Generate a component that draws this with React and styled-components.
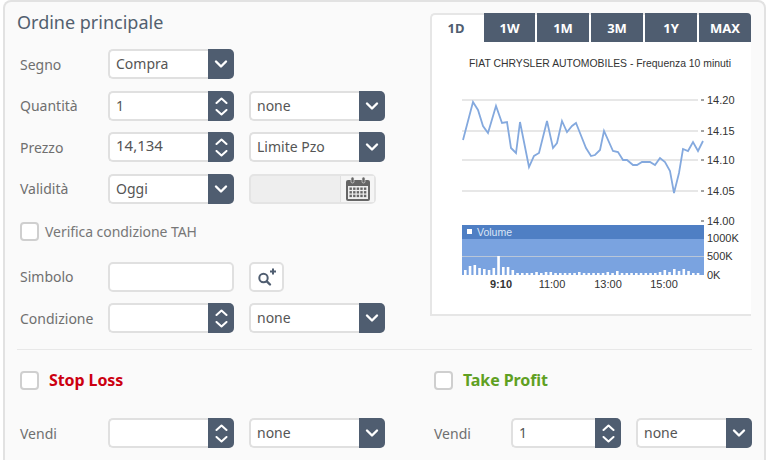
import styled, { createGlobalStyle } from "styled-components";

const GlobalStyle = createGlobalStyle`
  html, body {
    margin: 0;
    height: 460px;
    overflow: hidden;
    background: #fff;
  }
  * { box-sizing: border-box; }
`;

const DARK = "#4f5d70";

const Panel = styled.div`
  margin-left: 3px;
  width: 763px;
  height: 460px;
  overflow: hidden;
  background: #fafafa;
  border: 2px solid #e2e2e2;
  border-bottom: none;
  border-radius: 8px 8px 0 0;
  padding: 0 12px;
  font-family: "Noto Sans", sans-serif;
  color: #666;
`;

const TopArea = styled.div`
  display: flex;
  justify-content: space-between;
  align-items: flex-start;
  padding-right: 1px;
`;

const LeftColumn = styled.div`
  width: 372px;
  padding-top: 9px;
`;

const Title = styled.h2`
  margin: 0 0 16px;
  font-size: 18px;
  line-height: 22px;
  font-weight: 400;
  color: #52606f;
`;

const Rows = styled.div`
  display: flex;
  flex-direction: column;
  gap: 11.5px;
`;

const Row = styled.div`
  display: flex;
  align-items: center;
  height: 30px;
  padding-left: 3px;
`;

const Label = styled.span`
  width: ${(props) => props.width || 88}px;
  font-size: 14px;
  color: #6f6f6f;
`;

const Control = styled.div`
  display: flex;
  width: ${(props) => props.width}px;
  height: 30px;
  margin-left: ${(props) => props.gap || 0}px;
  background: #fff;
  border: 2px solid #e0e0e0;
  border-right: ${(props) => (props.plain ? "2px solid #e0e0e0" : "none")};
  border-radius: 5px;
`;

const Value = styled.div`
  flex: 1;
  padding-left: 6px;
  font-size: ${(props) => props.size || 14}px;
  line-height: ${(props) => (props.size ? 23 : 25)}px;
  color: #555;
`;

const ArrowBox = styled.div`
  width: 26px;
  margin: -2px 0;
  display: flex;
  flex-direction: column;
  align-items: center;
  justify-content: ${(props) => (props.spin ? "space-between" : "center")};
  padding: ${(props) => (props.spin ? "6px 0 5px" : "0")};
  background: ${DARK};
  border-radius: 0 5px 5px 0;
`;

const DateBox = styled.div`
  display: flex;
  width: 127px;
  height: 30px;
  margin-left: 15px;
  background: #eeeeee;
  border: 2px solid #e4e4e4;
  border-radius: 5px;
`;

const DateAddon = styled.div`
  width: 34px;
  margin-left: auto;
  display: flex;
  align-items: center;
  justify-content: center;
  background: #f5f5f5;
  border-left: 1px solid #e0e0e0;
`;

const SearchButton = styled.div`
  width: 35px;
  height: 30px;
  margin-left: 15px;
  display: flex;
  align-items: center;
  justify-content: center;
  background: #fff;
  border: 2px solid #e0e0e0;
  border-radius: 5px;
`;

const CheckRow = styled.label`
  display: flex;
  align-items: center;
  height: 18px;
  margin: ${(props) => props.margin};
  padding-left: 3px;
`;

const Box = styled.span`
  width: 19px;
  height: 19px;
  flex: none;
  background: #fff;
  border: 2px solid #cfcfcf;
  border-radius: 4px;
`;

const CheckText = styled.span`
  margin-left: ${(props) => props.gap}px;
  font-size: ${(props) => (props.color ? 16 : 14)}px;
  font-weight: ${(props) => (props.color ? 700 : 400)};
  letter-spacing: ${(props) => (props.color ? "-0.1px" : "-0.05px")};
  color: ${(props) => props.color || "#777"};
`;

const ChartCard = styled.div`
  width: 321px;
  height: 303px;
  margin-top: 11px;
  background: #fff;
  border: 2px solid #e6e6e6;
  border-right: none;
  border-radius: 5px 5px 0 0;
`;

const Tabs = styled.div`
  display: flex;
  gap: 2px;
  margin: -2px 0 0 -2px;
`;

const Tab = styled.div`
  width: ${(props) => props.width}px;
  height: 29px;
  display: flex;
  align-items: center;
  justify-content: center;
  font-size: 13px;
  font-weight: 700;
  background: ${(props) => (props.active ? "transparent" : DARK)};
  color: ${(props) => (props.active ? DARK : "#fff")};
  border-radius: ${(props) => props.radius || "0"};
`;

const ChartSvg = styled.svg`
  display: block;
  margin-left: -2px;
  font-family: "Liberation Sans", Arial, sans-serif;
  font-size: 11px;
  fill: #333;
`;

const Divider = styled.div`
  height: 1px;
  margin-top: 16px;
  background: #e8e8e8;
  width: 735px;
`;

const BottomArea = styled.div`
  display: flex;
`;

const Side = styled.div`
  width: ${(props) => props.width}px;
`;

const Chevron = () => (
  <svg width="14" height="10" viewBox="0 0 14 10">
    <path
      d="M2 2.5l5 5 5-5"
      fill="none"
      stroke="#fff"
      strokeWidth="2.4"
      strokeLinecap="round"
      strokeLinejoin="round"
    />
  </svg>
);

const SmallChevron = ({ up }) => (
  <svg width="13" height="7" viewBox="0 0 13 7">
    <path
      d={up ? "M1.5 6l5-4.5 5 4.5" : "M1.5 1l5 4.5 5-4.5"}
      fill="none"
      stroke="#fff"
      strokeWidth="2"
      strokeLinecap="round"
      strokeLinejoin="round"
    />
  </svg>
);

const CalendarIcon = () => (
  <svg width="26" height="26" viewBox="0 0 26 26">
    <rect x="1" y="4" width="24" height="21" rx="2" fill="#666" />
    <rect x="3" y="10" width="20" height="13" fill="#eee" />
    <rect x="6" y="1" width="3" height="6" rx="1.5" fill="#666" stroke="#eee" strokeWidth="0.6" />
    <rect x="17" y="1" width="3" height="6" rx="1.5" fill="#666" stroke="#eee" strokeWidth="0.6" />
    {[0, 1, 2].map((r) =>
      [0, 1, 2, 3, 4].map((c) => (
        <rect key={`${r}-${c}`} x={4.5 + c * 3.6} y={11.5 + r * 3.6} width="2.4" height="2.4" fill="#666" />
      ))
    )}
  </svg>
);

const SearchPlusIcon = () => (
  <svg width="22" height="20" viewBox="0 0 22 20">
    <circle cx="7.5" cy="11" r="4.2" fill="none" stroke={DARK} strokeWidth="2" />
    <path d="M10.8 14.3l3.2 3.2" stroke={DARK} strokeWidth="2.4" strokeLinecap="round" />
    <path d="M17 1.5v6M14 4.5h6" stroke={DARK} strokeWidth="2" />
  </svg>
);

const Select = ({ value, width, gap }) => (
  <Control width={width} gap={gap}>
    <Value>{value}</Value>
    <ArrowBox>
      <Chevron />
    </ArrowBox>
  </Control>
);

const Spinner = ({ value, width = 126, size }) => (
  <Control width={width}>
    <Value size={size}>{value}</Value>
    <ArrowBox spin>
      <SmallChevron up />
      <SmallChevron />
    </ArrowBox>
  </Control>
);

const priceLine = [
  [463, 139], [473, 101], [478, 109], [483, 125], [488, 132], [496, 105], [502, 122], [507, 121],
  [511, 147], [516, 152], [520, 121], [529, 166], [534, 155], [539, 152], [547, 120], [553, 147],
  [557, 142], [562, 120], [567, 131], [572, 125], [576, 122], [580, 132], [586, 147], [591, 155],
  [595, 154], [600, 149], [604, 130], [613, 150], [618, 151], [623, 159], [627, 159], [633, 164],
  [637, 164], [642, 161], [650, 161], [655, 164], [660, 157], [665, 161], [670, 170], [674, 192],
  [679, 172], [683, 148], [688, 150], [693, 141], [698, 150], [703, 140],
];

const volumes = [
  5, 9, 10, 7, 6, 5, 7, 19, 8, 8, 5, 2, 2, 2, 2, 3, 2, 3, 3, 2, 2, 2, 2, 2, 3, 2, 2, 2, 2, 2, 3, 2,
  4, 2, 2, 2, 2, 2, 2, 2, 2, 3, 5, 3, 6, 4, 6, 4, 2, 2,
];

const gridLines = [99, 130, 159, 190];

const PriceChart = () => (
  <ChartSvg width="321" height="272" viewBox="430 41 321 272">
    <text x="600" y="66" textAnchor="middle" fontSize="10.4">
      FIAT CHRYSLER AUTOMOBILES - Frequenza 10 minuti
    </text>
    {gridLines.map((y) => (
      <line key={y} x1="462" x2="698" y1={y} y2={y} stroke="#cfcfcf" strokeWidth="1.2" />
    ))}
    {[99, 130, 159, 190, 220].map((y) => (
      <line key={y} x1="701" x2="704" y1={y} y2={y} stroke="#444" />
    ))}
    {[["14.20", 99], ["14.15", 130], ["14.10", 159], ["14.05", 190], ["14.00", 220]].map(([t, y]) => (
      <text key={t} x="707" y={y + 4}>{t}</text>
    ))}
    <polyline
      points={priceLine.map((p) => p.join(",")).join(" ")}
      fill="none"
      stroke="#84a9de"
      strokeWidth="1.8"
    />
    <rect x="462" y="224" width="242" height="50" fill="#7aa3e0" />
    <rect x="462" y="224" width="242" height="14" fill="#4f7fc4" />
    <line x1="462" x2="704" y1="255.5" y2="255.5" stroke="#b9c6d8" />
    {volumes.map((v, i) => (
      <rect key={i} x={464 + i * 4.75} y={274 - v} width="2.6" height={v} fill="#fff" />
    ))}
    <rect x="467" y="228" width="5" height="5" fill="#fff" />
    <text x="477" y="235" fontSize="10.5" fill="#dbe6f6">Volume</text>
    {[["1000K", 241], ["500K", 259], ["0K", 278]].map(([t, y]) => (
      <text key={t} x="707" y={y}>{t}</text>
    ))}
    <text x="501" y="287" textAnchor="middle" fontWeight="700">9:10</text>
    {[["11:00", 552], ["13:00", 608], ["15:00", 664]].map(([t, x]) => (
      <text key={t} x={x} y="287" textAnchor="middle">{t}</text>
    ))}
  </ChartSvg>
);

const tabs = [
  { label: "1W", width: 51 },
  { label: "1M", width: 52 },
  { label: "3M", width: 52 },
  { label: "1Y", width: 52 },
  { label: "MAX", width: 52, radius: "0 4px 0 0" },
];

const App = () => (
  <>
    <GlobalStyle />
    <Panel>
      <TopArea>
        <LeftColumn>
          <Title>Ordine principale</Title>
          <Rows>
            <Row>
              <Label>Segno</Label>
              <Select value="Compra" width={126} />
            </Row>
            <Row>
              <Label>Quantità</Label>
              <Spinner value="1" />
              <Select value="none" width={136} gap={15} />
            </Row>
            <Row>
              <Label>Prezzo</Label>
              <Spinner value="14,134" size={15} />
              <Select value="Limite Pzo" width={136} gap={15} />
            </Row>
            <Row>
              <Label>Validità</Label>
              <Select value="Oggi" width={126} />
              <DateBox>
                <DateAddon>
                  <CalendarIcon />
                </DateAddon>
              </DateBox>
            </Row>
          </Rows>
          <CheckRow margin="19px 0 21px">
            <Box />
            <CheckText gap={6}>Verifica condizione TAH</CheckText>
          </CheckRow>
          <Rows>
            <Row>
              <Label>Simbolo</Label>
              <Control width={126} plain />
              <SearchButton>
                <SearchPlusIcon />
              </SearchButton>
            </Row>
            <Row>
              <Label>Condizione</Label>
              <Spinner />
              <Select value="none" width={136} gap={15} />
            </Row>
          </Rows>
        </LeftColumn>
        <ChartCard>
          <Tabs>
            <Tab active width={52}>1D</Tab>
            {tabs.map((tab) => (
              <Tab key={tab.label} width={tab.width} radius={tab.radius}>
                {tab.label}
              </Tab>
            ))}
          </Tabs>
          <PriceChart />
        </ChartCard>
      </TopArea>
      <Divider />
      <BottomArea>
        <Side width={414}>
          <CheckRow margin="21px 0 29px">
            <Box />
            <CheckText gap={10} color="#cc0011">Stop Loss</CheckText>
          </CheckRow>
          <Rows>
            <Row>
              <Label>Vendi</Label>
              <Spinner />
              <Select value="none" width={136} gap={15} />
            </Row>
            <Row>
              <Label />
              <Spinner />
              <Select width={136} gap={15} />
            </Row>
          </Rows>
        </Side>
        <Side width={321}>
          <CheckRow margin="21px 0 29px">
            <Box />
            <CheckText gap={10} color="#5fa022">Take Profit</CheckText>
          </CheckRow>
          <Rows>
            <Row>
              <Label width={77}>Vendi</Label>
              <Spinner value="1" width={110} />
              <Select value="none" width={116} gap={15} />
            </Row>
            <Row>
              <Label width={77} />
              <Spinner width={110} />
              <Select width={116} gap={15} />
            </Row>
          </Rows>
        </Side>
      </BottomArea>
    </Panel>
  </>
);

export default App;
